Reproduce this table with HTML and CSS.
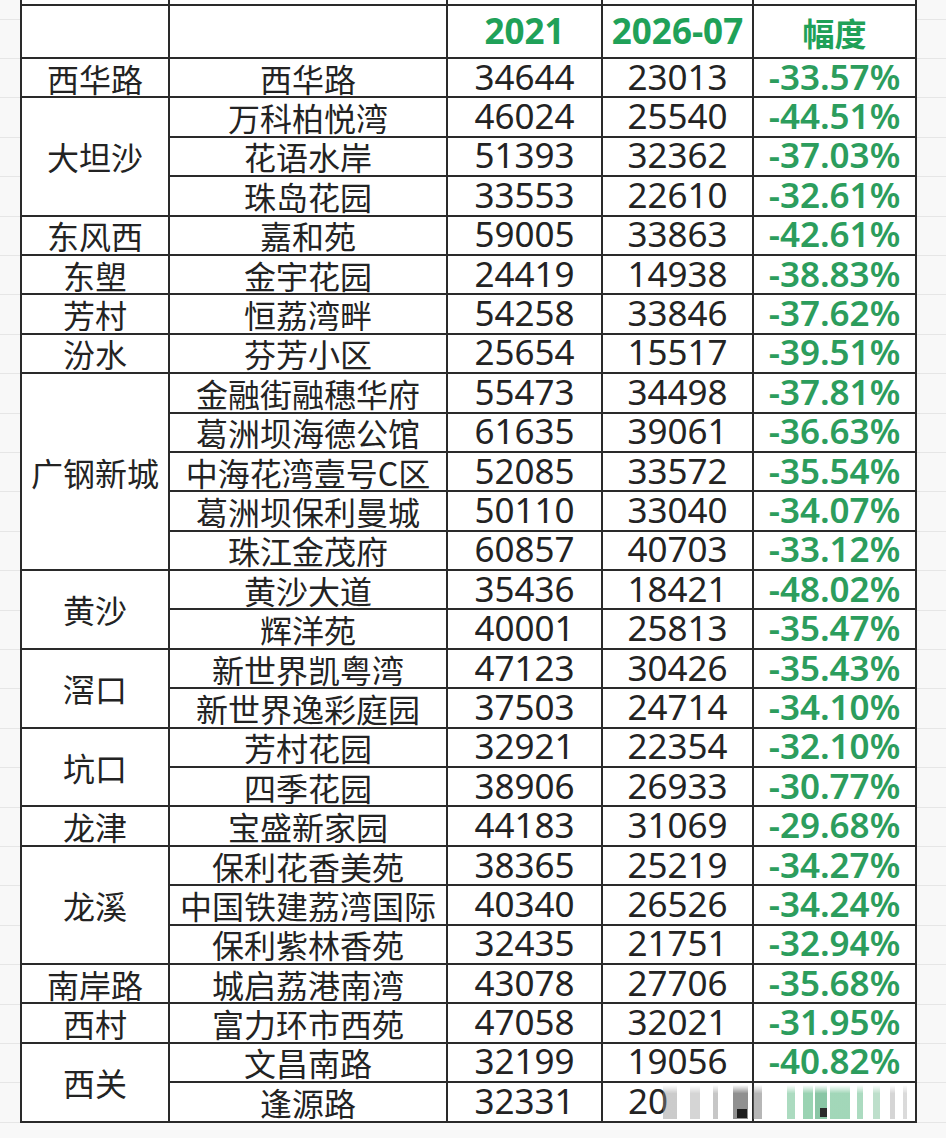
FILE: index.html
```html
<!DOCTYPE html>
<html lang="zh-CN">
<head>
<meta charset="utf-8">
<title>荔湾楼盘价格幅度</title>
<link rel="stylesheet" href="styles.css">
</head>
<body>
<div class="sheet">
  <div class="grid">
    <div class="c top"></div><div class="c top"></div><div class="c top"></div><div class="c top"></div><div class="c top"></div>

    <div class="c"></div><div class="c"></div><div class="c num h">2021</div><div class="c num h">2026-07</div><div class="c cjk h">幅度</div>

    <div class="c cjk">西华路</div><div class="c cjk">西华路</div><div class="c num">34644</div><div class="c num">23013</div><div class="c num p">-33.57%</div>

    <div class="c cjk span3">大坦沙</div>
    <div class="c cjk">万科柏悦湾</div><div class="c num">46024</div><div class="c num">25540</div><div class="c num p">-44.51%</div>
    <div class="c cjk">花语水岸</div><div class="c num">51393</div><div class="c num">32362</div><div class="c num p">-37.03%</div>
    <div class="c cjk">珠岛花园</div><div class="c num">33553</div><div class="c num">22610</div><div class="c num p">-32.61%</div>

    <div class="c cjk">东风西</div><div class="c cjk">嘉和苑</div><div class="c num">59005</div><div class="c num">33863</div><div class="c num p">-42.61%</div>
    <div class="c cjk">东塱</div><div class="c cjk">金宇花园</div><div class="c num">24419</div><div class="c num">14938</div><div class="c num p">-38.83%</div>
    <div class="c cjk">芳村</div><div class="c cjk">恒荔湾畔</div><div class="c num">54258</div><div class="c num">33846</div><div class="c num p">-37.62%</div>
    <div class="c cjk">汾水</div><div class="c cjk">芬芳小区</div><div class="c num">25654</div><div class="c num">15517</div><div class="c num p">-39.51%</div>

    <div class="c cjk span5">广钢新城</div>
    <div class="c cjk">金融街融穗华府</div><div class="c num">55473</div><div class="c num">34498</div><div class="c num p">-37.81%</div>
    <div class="c cjk">葛洲坝海德公馆</div><div class="c num">61635</div><div class="c num">39061</div><div class="c num p">-36.63%</div>
    <div class="c cjk">中海花湾壹号C区</div><div class="c num">52085</div><div class="c num">33572</div><div class="c num p">-35.54%</div>
    <div class="c cjk">葛洲坝保利曼城</div><div class="c num">50110</div><div class="c num">33040</div><div class="c num p">-34.07%</div>
    <div class="c cjk">珠江金茂府</div><div class="c num">60857</div><div class="c num">40703</div><div class="c num p">-33.12%</div>

    <div class="c cjk span2">黄沙</div>
    <div class="c cjk">黄沙大道</div><div class="c num">35436</div><div class="c num">18421</div><div class="c num p">-48.02%</div>
    <div class="c cjk">辉洋苑</div><div class="c num">40001</div><div class="c num">25813</div><div class="c num p">-35.47%</div>

    <div class="c cjk span2">滘口</div>
    <div class="c cjk">新世界凯粤湾</div><div class="c num">47123</div><div class="c num">30426</div><div class="c num p">-35.43%</div>
    <div class="c cjk">新世界逸彩庭园</div><div class="c num">37503</div><div class="c num">24714</div><div class="c num p">-34.10%</div>

    <div class="c cjk span2">坑口</div>
    <div class="c cjk">芳村花园</div><div class="c num">32921</div><div class="c num">22354</div><div class="c num p">-32.10%</div>
    <div class="c cjk">四季花园</div><div class="c num">38906</div><div class="c num">26933</div><div class="c num p">-30.77%</div>

    <div class="c cjk">龙津</div><div class="c cjk">宝盛新家园</div><div class="c num">44183</div><div class="c num">31069</div><div class="c num p">-29.68%</div>

    <div class="c cjk span3">龙溪</div>
    <div class="c cjk">保利花香美苑</div><div class="c num">38365</div><div class="c num">25219</div><div class="c num p">-34.27%</div>
    <div class="c cjk">中国铁建荔湾国际</div><div class="c num">40340</div><div class="c num">26526</div><div class="c num p">-34.24%</div>
    <div class="c cjk">保利紫林香苑</div><div class="c num">32435</div><div class="c num">21751</div><div class="c num p">-32.94%</div>

    <div class="c cjk">南岸路</div><div class="c cjk">城启荔港南湾</div><div class="c num">43078</div><div class="c num">27706</div><div class="c num p">-35.68%</div>
    <div class="c cjk">西村</div><div class="c cjk">富力环市西苑</div><div class="c num">47058</div><div class="c num">32021</div><div class="c num p">-31.95%</div>

    <div class="c cjk span2">西关</div>
    <div class="c cjk">文昌南路</div><div class="c num">32199</div><div class="c num">19056</div><div class="c num p">-40.82%</div>
    <div class="c cjk">逢源路</div><div class="c num">32331</div><div class="c num cut">20</div><div class="c num p last"><span class="mark" aria-hidden="true"></span></div>
  </div>
</div>
</body>
</html>
```

FILE: styles.css
```css
html, body {
  margin: 0;
  padding: 0;
}

body {
  width: 946px;
  height: 1138px;
  overflow: hidden;
  background-color: #f8f8f8;
  background-image: repeating-linear-gradient(180deg, transparent 0 18.6px, #e6e6e6 18.6px 19.6px, transparent 19.6px 39.4px);
}

.sheet {
  padding-left: 20px;
}

.grid {
  display: grid;
  width: 897px;
  box-sizing: border-box;
  border-left: 2px solid #2a2a2a;
  grid-template-columns: 148px 278px 155px 151px 163px;
  grid-template-rows: 6px 53px repeat(27, 39.4px);
  background: #fff;
  position: relative;
}

.c {
  box-sizing: border-box;
  border-right: 2px solid #2a2a2a;
  border-bottom: 2px solid #2a2a2a;
  display: flex;
  align-items: center;
  justify-content: center;
  white-space: nowrap;
  color: #232323;
  background: #fff;
}

.span2 { grid-row: span 2; }
.span3 { grid-row: span 3; }
.span5 { grid-row: span 5; }

.cjk {
  font-family: "Noto Sans CJK SC", "Noto Sans", sans-serif;
  font-size: 32px;
  line-height: 1;
}

.num {
  font-family: "Noto Sans", "Open Sans", sans-serif;
  font-size: 35px;
  line-height: 1;
  padding-bottom: 3px;
}

.h {
  font-weight: 700;
  color: #20a158;
}

.p {
  font-weight: 600;
  color: #2c9d5d;
}

.cut {
  justify-content: flex-start;
  padding-left: 25px;
}

.last {
  position: relative;
}

.mark {
  position: absolute;
  left: -94px;
  top: 2px;
  width: 256px;
  height: 34px;
  background:
    linear-gradient(#1d1d1d, #1d1d1d) 77px 24px / 10px 9px no-repeat,
    linear-gradient(#2b2b2b, #2b2b2b) 160px 23px / 7px 9px no-repeat,
    linear-gradient(90deg,
      transparent 0 3px,
      rgba(140,140,140,0.45) 3px 17px,
      transparent 17px 30px,
      rgba(150,150,150,0.4) 30px 40px,
      transparent 40px 53px,
      rgba(130,130,130,0.45) 53px 58px,
      transparent 58px 73px,
      rgba(70,70,70,0.6) 73px 88px,
      transparent 88px 93px,
      rgba(110,110,110,0.5) 93px 102px,
      transparent 102px 127px,
      rgba(70,175,115,0.45) 127px 135px,
      transparent 135px 143px,
      rgba(70,175,115,0.55) 143px 153px,
      transparent 153px 155px,
      rgba(60,160,105,0.6) 155px 167px,
      transparent 167px 170px,
      rgba(70,175,115,0.5) 170px 190px,
      transparent 190px 197px,
      rgba(70,175,115,0.45) 197px 203px,
      transparent 203px 213px,
      rgba(90,175,125,0.4) 213px 220px,
      transparent 220px 230px,
      rgba(150,150,150,0.4) 230px 235px,
      transparent 235px 243px,
      rgba(150,150,150,0.35) 243px 247px,
      transparent 247px 256px);
  -webkit-mask-image: linear-gradient(180deg, transparent 0, #000 25%, #000 100%);
  mask-image: linear-gradient(180deg, transparent 0, #000 25%, #000 100%);
}
```
